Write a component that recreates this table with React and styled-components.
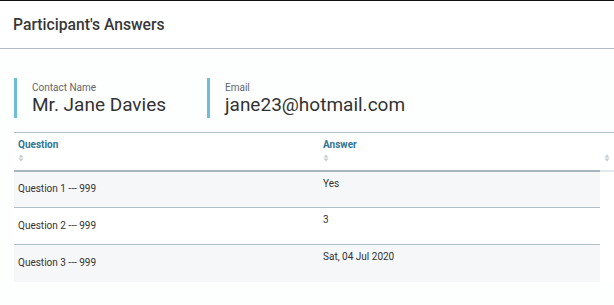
import React from "react";
import styled, { createGlobalStyle } from "styled-components";

const Global = createGlobalStyle`
  html, body { margin: 0; padding: 0; background: #fff; }
  body { font-family: Roboto, "Noto Sans", Arial, sans-serif; color: #333; }
`;

const Page = styled.div`
  width: 614px;
  height: 305px;
  overflow: hidden;
  border-top: 1px solid #111;
  box-sizing: border-box;
  background: #fff;
`;

const Header = styled.div`
  height: 48px;
  display: flex;
  align-items: center;
  padding-left: 13px;
  border-bottom: 1px solid #b3bcc3;
  box-sizing: border-box;
`;

const Title = styled.h1`
  margin: 0;
  font-size: 15.7px;
  font-weight: 500;
  color: #383838;
`;

const Body = styled.div`
  background: #fdfefe;
  padding: 29px 0 0 14px;
  height: 256px;
  box-sizing: border-box;
`;

const InfoRow = styled.div`
  display: flex;
  height: 40px;
`;

const Info = styled.div`
  width: ${(p) => p.$width}px;
  display: flex;
  flex-direction: column;
  border-left: 3px solid #6cbedb;
  padding-left: 15px;
  box-sizing: border-box;
`;

const Label = styled.div`
  font-size: 10px;
  color: #666;
  margin-top: 4px;
  line-height: 12px;
`;

const Value = styled.div`
  font-size: 19px;
  color: #333;
  line-height: 22px;
`;

const TableWrap = styled.div`
  margin-top: 14px;
  overflow: hidden;
`;

const Table = styled.table`
  border-collapse: collapse;
  table-layout: fixed;
  width: 620px;
  border-top: 1px solid #b3bfc6;
`;

const Th = styled.th`
  text-align: left;
  vertical-align: top;
  padding: 6px 0 0 4px;
  height: 38px;
  box-sizing: border-box;
  font-size: 10px;
  font-weight: 700;
  color: #2f7594;
  border-bottom: 2px solid ${(p) => (p.$light ? "#e4e8ea" : "#a8b5bc")};
  background: #fff;
  line-height: 12px;
`;

const SortIcon = styled.svg`
  display: block;
  margin-top: 3px;
`;

const Tr = styled.tr`
  background: ${(p) => (p.$alt ? "#f6f7f8" : "#fff")};
`;

const Td = styled.td`
  height: 37px;
  padding: ${(p) => (p.$top ? "6px 0 0 4px" : "0 0 0 4px")};
  vertical-align: ${(p) => (p.$top ? "top" : "middle")};
  font-size: 10px;
  line-height: 12px;
  color: #333;
  border-bottom: ${(p) => (p.$last ? "0" : "1px solid #b3bfc6")};
  box-sizing: border-box;
`;

const EmptyTd = styled.td`
  background: #fff;
`;

const Sort = () => (
  <SortIcon width="6" height="8" viewBox="0 0 6 8">
    <path d="M0.5 3.4 L3 0.6 L5.5 3.4 Z" fill="#c5ccd0" />
    <path d="M0.5 4.6 L3 7.4 L5.5 4.6 Z" fill="#c5ccd0" />
  </SortIcon>
);

const rows = [
  { q: "Question 1 --- 999", a: "Yes" },
  { q: "Question 2 --- 999", a: "3" },
  { q: "Question 3 --- 999", a: "Sat, 04 Jul 2020" },
];

export default function App() {
  return (
    <>
      <Global />
      <Page>
        <Header>
          <Title>Participant's Answers</Title>
        </Header>
        <Body>
          <InfoRow>
            <Info $width={193}>
              <Label>Contact Name</Label>
              <Value>Mr. Jane Davies</Value>
            </Info>
            <Info $width={250}>
              <Label>Email</Label>
              <Value>jane23@hotmail.com</Value>
            </Info>
          </InfoRow>
          <TableWrap>
            <Table>
              <colgroup>
                <col style={{ width: 305 }} />
                <col style={{ width: 281 }} />
                <col style={{ width: 34 }} />
              </colgroup>
              <thead>
                <tr>
                  <Th>
                    Question
                    <Sort />
                  </Th>
                  <Th>
                    Answer
                    <Sort />
                  </Th>
                  <Th $light>
                    &nbsp;
                    <Sort />
                  </Th>
                </tr>
              </thead>
              <tbody>
                {rows.map((r, i) => (
                  <Tr key={i} $alt={i % 2 === 0}>
                    <Td $last={i === rows.length - 1}>{r.q}</Td>
                    <Td $top $last={i === rows.length - 1}>{r.a}</Td>
                    <EmptyTd />
                  </Tr>
                ))}
              </tbody>
            </Table>
          </TableWrap>
        </Body>
      </Page>
    </>
  );
}
